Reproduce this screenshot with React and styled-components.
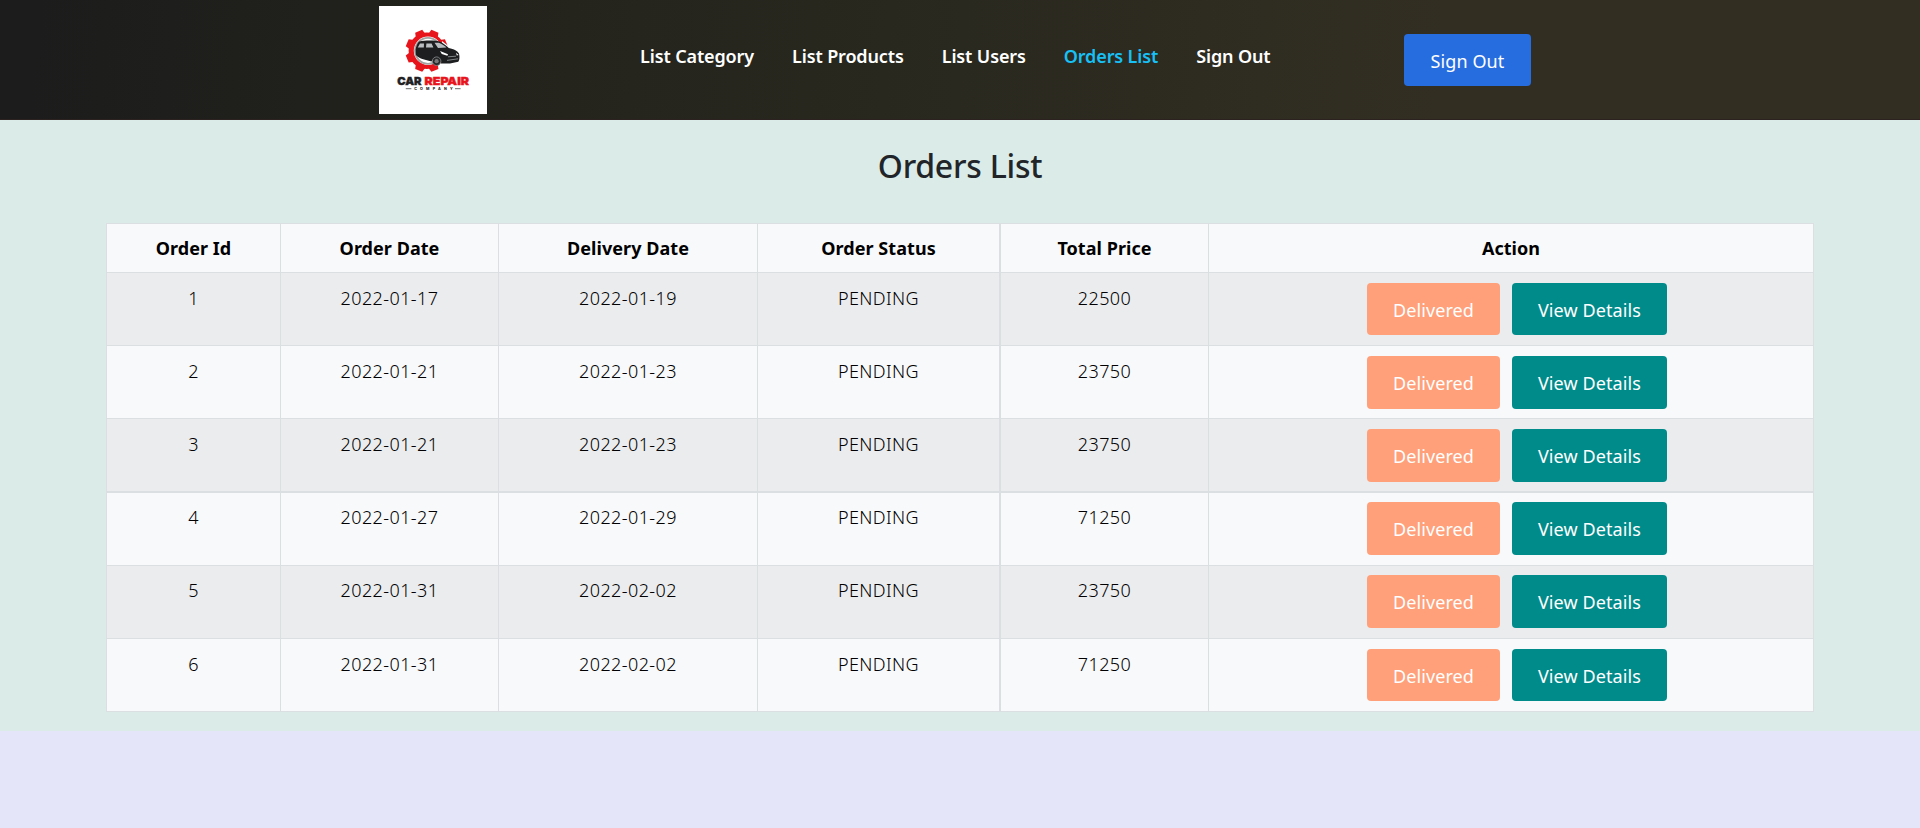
import React from 'react';
import styled, { createGlobalStyle } from 'styled-components';

const GlobalStyle = createGlobalStyle`
  *, *::before, *::after { box-sizing: border-box; }
  body {
    margin: 0;
    background: #e4e5f9;
    color: #212529;
    font-family: "Noto Sans", "Open Sans", sans-serif;
    font-size: 18px;
    line-height: 27px;
  }
`;

const Header = styled.header`
  display: flex;
  align-items: center;
  height: 120px;
  padding: 1px 0 0 379px;
  background: linear-gradient(95deg, #1c1c1c 2%, #22221c 23%, #2a291f 50%, #322e22 75%);
  border-bottom: 1px solid #2c221f;
`;

const Logo = styled.svg`
  display: block;
  flex: none;
  width: 108px;
  height: 108px;
  background: #fff;
`;

const Nav = styled.nav`
  display: flex;
  gap: 38px;
  width: 764px;
  margin-left: 153px;
  padding-bottom: 7px;
`;

const NavLink = styled.a`
  color: ${({ $active }) => ($active ? '#17c0f5' : '#fff')};
  font-weight: 600;
  letter-spacing: -0.13px;
  white-space: nowrap;
`;

const BUTTON_COLORS = {
  primary: '#266de0',
  salmon: '#ffa07a',
  teal: '#008b8b',
};

const Button = styled.button`
  flex: none;
  width: ${({ $width }) => $width}px;
  height: ${({ $height = 53 }) => $height}px;
  padding: ${({ $height = 53 }) => ($height === 52 ? 2 : 1)}px 0 0;
  border: 0;
  border-radius: 4px;
  background: ${({ $tone }) => BUTTON_COLORS[$tone]};
  color: #fff;
  font: 400 18px/27px "Noto Sans", "Open Sans", sans-serif;
  letter-spacing: 0.1px;
  text-align: center;
`;

const Main = styled.main`
  height: 611px;
  padding: 26px 106px 0;
  background: #dbebe7;
`;

const Title = styled.h1`
  margin: 0 0 37px;
  font-size: 32px;
  font-weight: 500;
  line-height: 40px;
  letter-spacing: -0.25px;
  text-align: center;
`;

const Table = styled.table`
  width: 1708px;
  table-layout: fixed;
  border-collapse: separate;
  border-spacing: 0;
  border-right: 1px solid #dcdfe2;
  border-bottom: 1px solid #dcdfe2;
  color: #000;
  text-align: center;
`;

const Col = styled.col`
  width: ${({ $width }) => $width}px;
`;

const HeadCell = styled.th`
  height: 49px;
  padding: 11px 0 0;
  border: 0 solid #dcdfe2;
  border-width: 1px 0 0 ${({ $thick }) => ($thick ? 2 : 1)}px;
  background: #f8f9fb;
  font-weight: 700;
  letter-spacing: 0.05px;
  vertical-align: top;
`;

const Row = styled.tr`
  background: #f8f9fb;
  &:nth-child(odd) { background: #ebecee; }
`;

const Cell = styled.td`
  height: ${({ $tall }) => ($tall ? 74 : 73)}px;
  padding: ${({ $tall, $raised }) => 12 - ($tall || $raised ? 1 : 0)}px 0 0;
  border: 0 solid #dcdfe2;
  border-width: ${({ $tall }) => ($tall ? 2 : 1)}px 0 0 ${({ $thick }) => ($thick ? 2 : 1)}px;
  font-weight: 350;
  letter-spacing: 0.4px;
  vertical-align: top;
`;

const ActionCell = styled(Cell)`
  padding: ${({ $tall, $raised }) => 10 - ($tall || $raised ? 1 : 0)}px 0 0 12px;
`;

const Actions = styled.div`
  display: flex;
  justify-content: center;
  gap: 12px;
`;

const COLUMNS = [
  { label: 'Order Id', width: 174 },
  { label: 'Order Date', width: 218 },
  { label: 'Delivery Date', width: 259 },
  { label: 'Order Status', width: 242 },
  { label: 'Total Price', width: 209, thick: true },
  { label: 'Action', width: 605 },
];

const ORDERS = [
  ['1', '2022-01-17', '2022-01-19', 'PENDING', '22500'],
  ['2', '2022-01-21', '2022-01-23', 'PENDING', '23750'],
  ['3', '2022-01-21', '2022-01-23', 'PENDING', '23750'],
  ['4', '2022-01-27', '2022-01-29', 'PENDING', '71250'],
  ['5', '2022-01-31', '2022-02-02', 'PENDING', '23750'],
  ['6', '2022-01-31', '2022-02-02', 'PENDING', '71250'],
];

const LINKS = ['List Category', 'List Products', 'List Users', 'Orders List', 'Sign Out'];

const TEETH = [0, 45, 90, 135, 180, 225, 270, 315];

function CarRepairLogo() {
  return (
    <Logo viewBox="0 0 108 108" role="img" aria-label="Car Repair Company">
      <g fill="#e8141b">
        <circle cx="47.8" cy="44.8" r="18.2" />
        {TEETH.map((a) => (
          <path key={a} d="M42.6 29 L44 23.6 H51.6 L53 29 Z" transform={`rotate(${a + 22.5} 47.8 44.8)`} />
        ))}
      </g>
      <circle cx="49" cy="44.8" r="14.2" fill="#fff" />
      <circle cx="49" cy="44.8" r="13" fill="none" stroke="#a3a3a3" strokeWidth="1.8" />
      <path d="M63 35 L72 42 L80 47 L74 56 H62 Z" fill="#fff" />
      <path
        d="M36.6 43.5 C37.2 40 38.5 37 40.2 35.6 C45 34.2 56 34.2 60.5 35.4 C64 37 67.5 39.6 69.8 42 C75 43 78.8 45 80 47.6 C80.8 51 80.6 54 79.3 55.8 L71 57.4 L62 57.6 A5 5 0 0 0 52.5 55.5 L47 54 C42 53 38 51 36.8 48.5 Z"
        fill="#1c1e20"
      />
      <path d="M38.8 41.6 L41 37.6 H45 L44.8 41.6 Z M47.4 37.6 H52.6 L54.4 41.6 L47 41.6 Z" fill="#b9bdbf" />
      <path d="M55.5 36.8 H59.8 C63 38 65.8 40 67.4 41.6 L59 42 Z" fill="#b9bdbf" />
      <path d="M61 45 L69 48.2 L68.4 49.8 L62.8 48 Z M77 46.8 L79.6 49 L77.8 49.4 Z" fill="#fff" />
      <path d="M68 54.4 L79 52.8 M69 50.8 L77 50.2" stroke="#9b9ea0" strokeWidth=".8" />
      <circle cx="57.6" cy="55.2" r="4.3" fill="#26282a" stroke="#8b8d8f" strokeWidth=".8" />
      <circle cx="57.6" cy="55.2" r="2.1" fill="#777" />
      <g fontFamily="Inter, sans-serif" fontWeight="900" fontSize="11" strokeWidth=".4">
        <text x="18.2" y="79" fill="#1f2123" stroke="#1f2123" textLength="24.4" lengthAdjust="spacingAndGlyphs">CAR</text>
        <text x="45.6" y="79" fill="#e8141b" stroke="#e8141b" textLength="44.4" lengthAdjust="spacingAndGlyphs">REPAIR</text>
      </g>
      <text x="35.2" y="84.2" fontFamily="Inter, sans-serif" fontSize="3.6" fontWeight="800" fill="#222" textLength="38.4" lengthAdjust="spacing">COMPANY</text>
      <path d="M26.8 82.7 H32.4 M76 82.7 H81.6" stroke="#444" strokeWidth=".8" />
    </Logo>
  );
}

export default function App() {
  return (
    <>
      <GlobalStyle />
      <Header>
        <CarRepairLogo />
        <Nav>
          {LINKS.map((label) => (
            <NavLink key={label} $active={label === 'Orders List'}>{label}</NavLink>
          ))}
        </Nav>
        <Button $tone="primary" $width={127} $height={52}>Sign Out</Button>
      </Header>
      <Main>
        <Title>Orders List</Title>
        <Table>
          <colgroup>
            {COLUMNS.map((c) => <Col key={c.label} $width={c.width} />)}
          </colgroup>
          <thead>
            <tr>
              {COLUMNS.map((c) => <HeadCell key={c.label} $thick={c.thick}>{c.label}</HeadCell>)}
            </tr>
          </thead>
          <tbody>
            {ORDERS.map((order, r) => {
              const tall = r === 3;
              const raised = r === 4;
              const height = r === 0 || r === 5 ? 52 : 53;
              return (
                <Row key={order[0]}>
                  {order.map((value, i) => (
                    <Cell key={COLUMNS[i].label} $thick={COLUMNS[i].thick} $tall={tall} $raised={raised}>{value}</Cell>
                  ))}
                  <ActionCell $tall={tall} $raised={raised}>
                    <Actions>
                      <Button $tone="salmon" $width={133} $height={height}>Delivered</Button>
                      <Button $tone="teal" $width={155} $height={height}>View Details</Button>
                    </Actions>
                  </ActionCell>
                </Row>
              );
            })}
          </tbody>
        </Table>
      </Main>
    </>
  );
}
